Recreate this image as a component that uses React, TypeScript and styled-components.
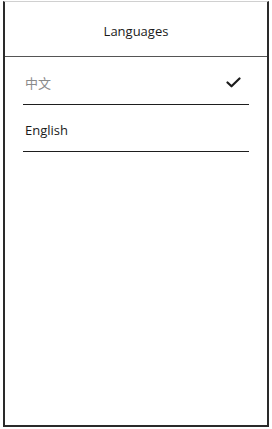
import React, { useState } from 'react'
import styled, { createGlobalStyle } from 'styled-components'

const GlobalStyle = createGlobalStyle`
  html, body {
    margin: 0;
    padding: 0;
    background: #ffffff;
  }
  body {
    font-family: "Open Sans", "Noto Sans CJK SC", sans-serif;
  }
`

const languages = [
  { id: 'zh', label: '中文' },
  { id: 'en', label: 'English' },
]

const App = () => {
  const [selected, setSelected] = useState('zh')

  return (
    <>
      <GlobalStyle />
      <Frame>
        <Header>Languages</Header>
        <LanguageList>
          {languages.map((lang) => (
            <LanguageRow key={lang.id} onClick={() => setSelected(lang.id)}>
              <LanguageLabel $muted={lang.id === 'zh'}>{lang.label}</LanguageLabel>
              {selected === lang.id && (
                <svg width='15' height='11' viewBox='0 0 15 11' fill='none'>
                  <path d='M1.5 5.5 L5.5 9.3 L13.5 1.5' stroke='#1c1c1c' strokeWidth='2.2' strokeLinecap='round' strokeLinejoin='round' />
                </svg>
              )}
            </LanguageRow>
          ))}
        </LanguageList>
      </Frame>
    </>
  )
}

export default App

const Frame = styled.div`
  box-sizing: border-box;
  margin: 1px 0 0 3px;
  width: 266px;
  height: 426px;
  border-top: 1px solid #d0d0d0;
  border-left: 2px solid #2a2a2a;
  border-right: 2px solid #2a2a2a;
  border-bottom: 2px solid #2a2a2a;
  display: flex;
  flex-direction: column;
`

const Header = styled.div`
  box-sizing: border-box;
  height: 55px;
  padding-top: 4px;
  border-bottom: 1px solid #555;
  display: flex;
  align-items: center;
  justify-content: center;
  font-size: 13px;
  color: #1a1a1a;
`

const LanguageList = styled.div`
  display: flex;
  flex-direction: column;
  padding: 0 18px 0 18px;
`

const LanguageRow = styled.div`
  box-sizing: border-box;
  height: 47.5px;
  border-bottom: 1.5px solid #1e1e1e;
  display: flex;
  align-items: center;
  justify-content: space-between;
  padding: 4px 8px 0 2px;
  cursor: pointer;
`

const LanguageLabel = styled.span<{ $muted?: boolean }>`
  font-size: 13px;
  color: ${(p) => (p.$muted ? '#8a8a8a' : '#1a1a1a')};
`
